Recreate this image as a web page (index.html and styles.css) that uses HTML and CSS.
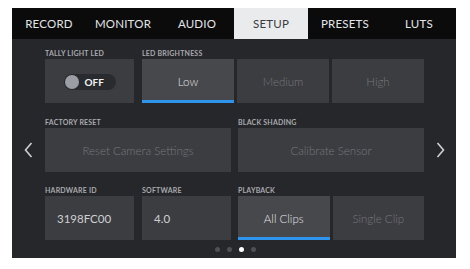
FILE: index.html
```html
<!DOCTYPE html>
<html lang="en">
    <head>
        <meta charset="UTF-8" />
        <title>Setup</title>
        <link rel="stylesheet" href="styles.css">
    </head>

    <body>
        <div class="screen">

            <!-- вкладки меню -->
            <div class="tabs">
                <div class="tab">RECORD</div>
                <div class="tab">MONITOR</div>
                <div class="tab">AUDIO</div>
                <div class="tab active">SETUP</div>
                <div class="tab">PRESETS</div>
                <div class="tab">LUTS</div>
            </div>

            <div class="page">
                <div class="side">
                    <svg width="9" height="16" viewBox="0 0 9 16"><path d="M7.5 1 L1.5 8 L7.5 15" fill="none" stroke="#cfd0d2" stroke-width="1.6"/></svg>
                </div>

                <div class="content">

                    <!-- первая строка -->
                    <div class="row">
                        <div class="group narrow">
                            <div class="label">TALLY LIGHT LED</div>
                            <div class="box center">
                                <div class="toggle">
                                    <span class="knob"></span>
                                    <span class="toggle-text">OFF</span>
                                </div>
                            </div>
                        </div>
                        <div class="group wide">
                            <div class="label">LED BRIGHTNESS</div>
                            <div class="segments">
                                <div class="box selected">Low</div>
                                <div class="box dim">Medium</div>
                                <div class="box dim">High</div>
                            </div>
                        </div>
                    </div>

                    <!-- вторая строка -->
                    <div class="row half">
                        <div class="group wide">
                            <div class="label">FACTORY RESET</div>
                            <div class="box dim">Reset Camera Settings</div>
                        </div>
                        <div class="group wide">
                            <div class="label">BLACK SHADING</div>
                            <div class="box dim">Calibrate Sensor</div>
                        </div>
                    </div>

                    <!-- третья строка -->
                    <div class="row last">
                        <div class="group narrow">
                            <div class="label">HARDWARE ID</div>
                            <div class="box value">3198FC00</div>
                        </div>
                        <div class="group narrow">
                            <div class="label">SOFTWARE</div>
                            <div class="box value">4.0</div>
                        </div>
                        <div class="group wide playback">
                            <div class="label">PLAYBACK</div>
                            <div class="segments">
                                <div class="box selected">All Clips</div>
                                <div class="box dim">Single Clip</div>
                            </div>
                        </div>
                    </div>

                    <!-- номер страницы -->
                    <div class="dots">
                        <span class="dot"></span>
                        <span class="dot"></span>
                        <span class="dot on"></span>
                        <span class="dot"></span>
                    </div>
                </div>

                <div class="side">
                    <svg width="9" height="16" viewBox="0 0 9 16"><path d="M1.5 1 L7.5 8 L1.5 15" fill="none" stroke="#cfd0d2" stroke-width="1.6"/></svg>
                </div>
            </div>
        </div>
    </body>
</html>
```

FILE: styles.css
```css
/* Сброс */
* {
    margin: 0;
    padding: 0;
    box-sizing: border-box;
    font-family: 'Lato', 'Open Sans', sans-serif;
}

body {
    background-color: white;
}

/* Экран камеры */
.screen {
    width: 444px;
    height: 250px;
    margin: 8px 0 0 12px;
    background-color: #26272b;
    display: flex;
    flex-direction: column;
}

/* Вкладки */
.tabs {
    display: grid;
    grid-template-columns: repeat(6, 1fr);
    height: 31px;
    background-color: #0b0b0c;
}
.tab {
    display: flex;
    align-items: center;
    justify-content: center;
    color: #e4e5e7;
    font-size: 11.5px;
    letter-spacing: 0.2px;
}
.tab.active {
    background-color: #e9ebed;
    color: #3b3c3f;
}

/* Основная часть */
.page {
    flex: 1;
    display: flex;
}
.side {
    width: 33px;
    display: flex;
    align-items: center;
    justify-content: center;
    padding-top: 2px;
}
.side:last-child {
    width: 32px;
}
.content {
    width: 379px;
    padding-top: 9px;
    display: flex;
    flex-direction: column;
    gap: 14px;
}

/* Строки и группы */
.row {
    display: flex;
    gap: 8px;
}
.row.half {
    gap: 7px;
}
.row.last {
    margin-top: -1px;
}
.group {
    display: flex;
    flex-direction: column;
}
.narrow {
    width: 89px;
}
.wide {
    flex: 1;
}
.playback {
    margin-left: -1px;
}
.label {
    font-size: 7px;
    line-height: 10px;
    font-weight: 700;
    letter-spacing: 0.2px;
    color: #a9aaae;
    margin-bottom: 1px;
}

/* Ячейки */
.segments {
    display: flex;
    gap: 3px;
}
.segments .box {
    flex: 1;
}
.box {
    height: 44px;
    background-color: #3c3d41;
    display: flex;
    align-items: center;
    justify-content: center;
    font-size: 11.5px;
    font-weight: 300;
    color: #d6d7d9;
}
.box.dim {
    color: #76777b;
}
.box.selected {
    background-color: #47484c;
    color: #e2e3e5;
    box-shadow: inset 0 -3px 0 #2f95ec;
}
.box.value {
    justify-content: flex-start;
    padding-left: 12px;
    font-weight: 400;
    color: #cfd0d2;
}
.box.center {
    padding-top: 2px;
}

/* Переключатель */
.toggle {
    width: 52px;
    height: 16px;
    border-radius: 8px;
    background-color: #2a2b2f;
    display: flex;
    align-items: center;
    padding-left: 1px;
}
.knob {
    width: 14px;
    height: 14px;
    border-radius: 50%;
    background-color: #9c9ea5;
}
.toggle-text {
    margin-left: 6px;
    font-size: 10px;
    font-weight: 700;
    color: #f2f2f2;
}

/* Точки страниц */
.dots {
    display: flex;
    justify-content: center;
    gap: 7px;
    margin-top: -7px;
    padding-left: 1px;
}
.dot {
    width: 5px;
    height: 5px;
    border-radius: 50%;
    background-color: #4f5054;
}
.dot.on {
    background-color: #ffffff;
}
```
